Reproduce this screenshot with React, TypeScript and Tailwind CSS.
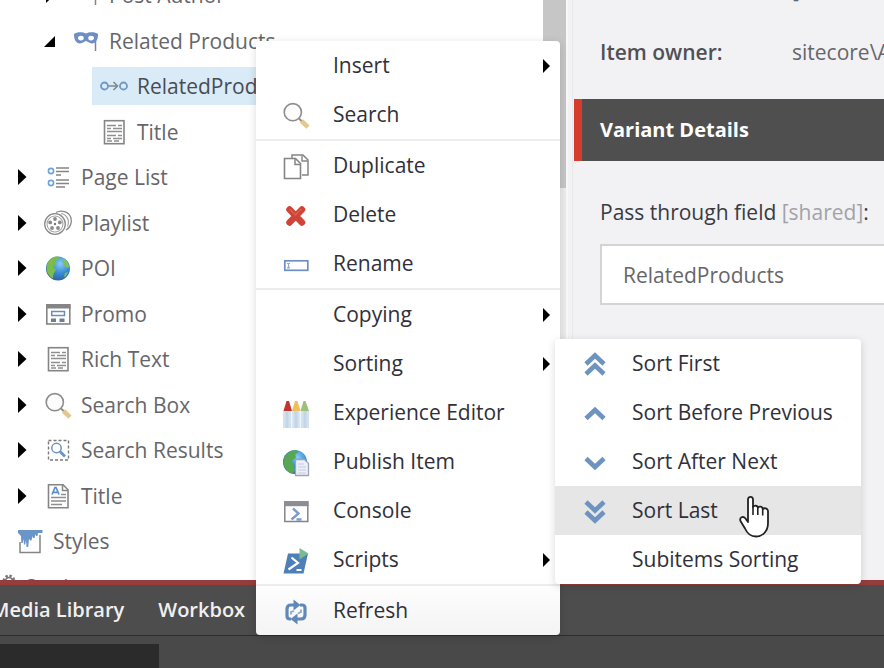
import type { ReactNode } from "react";

const GRAY = "#858585";
const BLUE = "#6a93c6";

function Icon({ children }: { children: ReactNode }) {
  return (
    <svg width="28" height="28" viewBox="0 0 28 28" fill="none" aria-hidden="true" className="shrink-0 overflow-visible">
      {children}
    </svg>
  );
}

const VariantIcon = () => (
  <Icon>
    <path d="M23.5 14v10" stroke={GRAY} strokeWidth="1.5" />
    <path
      fillRule="evenodd"
      fill="#6f8fc4"
      d="M2 7c3-2.500 9-2 12-.5 3-1.500 9-2 12 .5.3 5-2 9.500-6 9.500-3 0-4.500-2.500-6-2.500s-3 2.500-6 2.500C4 16.500 1.700 12 2 7zm4 4c0 1.500 1.200 2.400 3 2.400s2.800-1 2.800-2.400-1.200-2.200-2.800-2.200-3 .7-3 2.200zm10.200 0c0 1.400 1 2.400 2.800 2.400s3-.9 3-2.400-1.400-2.200-3-2.200-2.800.8-2.800 2.200z"
    />
  </Icon>
);

const LinkIcon = () => (
  <Icon>
    <circle cx="4.500" cy="14" r="3.500" stroke="#6f97c4" strokeWidth="1.800" />
    <circle cx="23.500" cy="14" r="3.500" stroke="#6f97c4" strokeWidth="1.800" />
    <path d="M8.500 14h9M13.500 10l4 4-4 4" stroke="#7d8a92" strokeWidth="1.600" />
  </Icon>
);

const DocIcon = () => (
  <Icon>
    <rect x="4.500" y="2.700" width="19.500" height="23" stroke={GRAY} strokeWidth="1.600" />
    <path
      d="M7 7.500h9M18 7.500h4M7 10.500h4M13 10.500h9M7 13.500h15M7 17.500h9M18 17.500h4M7 20.500h4M13 20.500h9M7 23h5M14 23h5"
      stroke="#8f8f8f"
      strokeWidth="1.300"
    />
  </Icon>
);

const ListIcon = () => (
  <Icon>
    <circle cx="7" cy="8" r="2.600" stroke="#6ea3d8" strokeWidth="1.600" />
    <circle cx="7" cy="20" r="2.600" stroke="#6ea3d8" strokeWidth="1.600" />
    <path d="M12 5h13M12 8.500h13M12 12h5M12 17h13M12 20.500h13M12 24h9" stroke={GRAY} strokeWidth="1.500" />
  </Icon>
);

const ReelIcon = () => (
  <Icon>
    <path d="M12 3.500C17 .5 25 2.500 27 9c1.200 5-1 10-5 12" stroke="#8a8a8a" strokeWidth="1.300" />
    <path d="M17 4.500c6 1 9 7 6.500 13" stroke="#a5a5a5" strokeWidth="1.200" />
    <circle cx="11" cy="15" r="10.300" stroke="#8a8a8a" strokeWidth="1.300" fill="#fff" />
    <circle cx="11" cy="15" r="8" stroke="#a5a5a5" strokeWidth="1.100" />
    <circle cx="11" cy="15" r="1.200" fill="#777" />
    <g fill="#8a8a8a">
      <circle cx="11" cy="10" r="1.900" />
      <circle cx="15.800" cy="13.400" r="1.900" />
      <circle cx="14" cy="19" r="1.900" />
      <circle cx="8" cy="19" r="1.900" />
      <circle cx="6.200" cy="13.400" r="1.900" />
    </g>
  </Icon>
);

const GlobeIcon = () => (
  <Icon>
    <defs>
      <radialGradient id="ocean" cx=".6" cy=".3" r=".75">
        <stop offset="0" stopColor="#8acbf4" />
        <stop offset=".5" stopColor="#3a8fd6" />
        <stop offset="1" stopColor="#2a5c9e" />
      </radialGradient>
    </defs>
    <circle cx="14" cy="14.500" r="12" fill="url(#ocean)" />
    <path d="M3.500 9C6 4 10 2.300 14 2.500l1 2.500-4 2 1.500 3-3.500 2.500 3 3.500-2.500 4-.5 4.500C4 22 1 16 3.500 9z" fill="#7cbc4a" />
    <path d="M19 4l4 3 2.500 6-2.500 1-3-3.500-1.500-3zM21 19l3-1-2 4-2 1z" fill="#86c055" />
  </Icon>
);

const PromoIcon = () => (
  <Icon>
    <rect x="2.800" y="5" width="23" height="19" stroke={GRAY} strokeWidth="1.600" />
    <path d="M2 4h24.500v4.500H2z" fill={GRAY} />
    <rect x="7.700" y="11.500" width="12.800" height="4" stroke="#6b8dba" strokeWidth="1.500" />
    <path d="M7 18.500h5V22H7zM15.500 18.500h5V22h-5z" fill="#6d7f96" />
  </Icon>
);

const SearchIcon = () => (
  <Icon>
    <circle cx="10.800" cy="11.200" r="8.600" stroke="#8e8e8e" strokeWidth="1.600" fill="#fcfcfc" />
    <path d="M17 17.500l3 3" stroke="#8e8e8e" strokeWidth="2" />
    <path d="M19.500 20l6.500 6.200" stroke="#e3c990" strokeWidth="4.600" />
  </Icon>
);

const SearchResultsIcon = () => (
  <Icon>
    <rect x="4.500" y="4.500" width="20" height="19.500" stroke="#7a7a7a" strokeWidth="1.400" strokeDasharray="3 2" />
    <circle cx="12.500" cy="12" r="4.700" stroke={BLUE} strokeWidth="1.500" />
    <path d="M16 15.500l5 5" stroke={BLUE} strokeWidth="2.800" />
  </Icon>
);

const TitleIcon = () => (
  <Icon>
    <path d="M4.500 2.800h14.500l5 5v18H4.500z" stroke={GRAY} strokeWidth="1.600" />
    <path d="M18.500 3v5.500H24" stroke={GRAY} strokeWidth="1.500" />
    <path d="M8 12.500l3-7h1l3 7M9 10.300h5" stroke="#5f8fca" strokeWidth="1.700" />
    <path d="M17 12.500h5M7 15.500h15M7 19h15M7 22.500h11" stroke="#8f8f8f" strokeWidth="1.400" />
  </Icon>
);

const PaintIcon = () => (
  <Icon>
    <path d="M4 15v10.500h20V8" stroke={GRAY} strokeWidth="1.500" />
    <path
      d="M2 3h24.500v3h-4.500l-.5 3h-1.500l-.5-2-1 4h-1.500l-.5-2-1 4.500h-1.200L13 12l-.8 8h-1.700L10 13l-.8 4.500H8L7.500 12l-.8 4H5.300L5 9 2 6z"
      fill="#6a95c8"
    />
  </Icon>
);

const GearIcon = () => (
  <Icon>
    <circle cx="21" cy="8" r="5" stroke="#777" strokeWidth="3" strokeDasharray="2.200 1.700" />
    <circle cx="21" cy="8" r="3.500" stroke="#777" strokeWidth="1.500" />
  </Icon>
);

const CopyIcon = () => (
  <Icon>
    <path d="M10 6V3h11l5 5v15h-6" stroke={GRAY} strokeWidth="1.500" />
    <path d="M20 3.500V9h5.500" stroke={GRAY} strokeWidth="1.400" />
    <path d="M2.500 6.500h11l5 5v15h-16z" fill="#fff" stroke={GRAY} strokeWidth="1.600" />
    <path d="M13 7v5.500h5.500" stroke={GRAY} strokeWidth="1.500" />
  </Icon>
);

const DeleteIcon = () => (
  <Icon>
    <path
      d="M7.500 8.500l12.500 13M20 8.500L7.500 21.500"
      stroke="#cf4436"
      strokeWidth="6.500"
      strokeLinecap="round"
    />
    <path d="M7.500 8l6 6 6-6" stroke="#dc6255" strokeWidth="1.200" />
  </Icon>
);

const RenameIcon = () => (
  <Icon>
    <rect x="2.800" y="10.800" width="23" height="9.500" stroke="#6d8fc4" strokeWidth="1.700" />
    <path d="M5 13.500h3M5 17.800h3M6.500 13.500v4.500" stroke="#8fa9cc" strokeWidth="1.200" />
  </Icon>
);

const CrayonIcon = () => (
  <Icon>
    <path d="M1 12h26v17H1z" fill="#d3e2ef" />
    <path d="M5 12v17M14 12v17M23 12v17" stroke="#c3d5e6" strokeWidth="3" />
    <path d="M9.700 12v17M18.300 12v17" stroke="#f2f7fb" strokeWidth="1.200" />
    <path d="M1.500 12L4.500 2h2.500l3 10z" fill="#c1352f" />
    <path d="M10 12l3-10h2.500l3 10z" fill="#ecc15c" />
    <path d="M18.500 12l3-10h2L27 12z" fill="#9dc07c" />
  </Icon>
);

const PublishIcon = () => (
  <Icon>
    <circle cx="13" cy="14" r="12" fill="url(#ocean)" />
    <path d="M2 11C4 4.500 9 1.800 14 2.200l3 1.300-4 3 1 3-4 3 1 4.500 2 5-2 3.500C5 25 0 18 2 11z" fill="#57a850" />
    <path d="M13.500 11.500h9l4 4V27.500h-13z" fill="#edf0f8" stroke="#9ba3bd" strokeWidth="1.300" />
    <path d="M16 16h6M16 19h8M16 22h8M16 25h8" stroke="#c5cce0" strokeWidth="1" />
  </Icon>
);

const ConsoleIcon = () => (
  <Icon>
    <rect x="2.800" y="5" width="23" height="19.500" stroke={GRAY} strokeWidth="1.500" fill="#fff" />
    <path d="M2 4.200h24.500v5H2z" fill="#8a8d94" />
    <path d="M11 11.500l5.500 5-7 6M14.500 22.500h5" stroke="#7e9bd0" strokeWidth="2.400" />
  </Icon>
);

const ScriptsIcon = () => (
  <Icon>
    <path d="M6 7.500h20L21.500 27.500H1.500z" fill="#4d80b8" />
    <path d="M9.500 11.500l6.500 5.500-9.500 6.500M14.500 24h5" stroke="#fff" strokeWidth="2.200" />
    <path d="M17.500 2l9 5.500-9 6z" fill="#7dba93" />
  </Icon>
);

const RefreshIcon = () => (
  <Icon>
    <g stroke="#6088b8" strokeWidth="3.200" strokeLinejoin="round">
      <path d="M9 22H8c-2.500 0-3-1.500-3-3v-7c0-2.500 1.500-4 4-4h5" />
      <path d="M18 8h2c2.500 0 3 1.500 3 3v7c0 2.500-1.500 4-4 4h-5" />
    </g>
    <path d="M11.500 2.500l7 5.500-7 5.500zM15.500 16.500l-7 5.500 7 5.500z" fill="#6088b8" />
    <path d="M9 17.500v-2.500l3-1M19 12.500v2.500l-3 1.500" stroke="#8aa9cf" strokeWidth="1.800" />
  </Icon>
);

const Chevrons = ({ d }: { d: string }) => (
  <Icon>
    <path d={d} stroke="#6d94c0" strokeWidth="4.600" />
  </Icon>
);

type TreeItem = { label: string; indent: string; icon: ReactNode; state?: "open" | "closed"; selected?: boolean };

const tree: TreeItem[] = [
  { label: "Post Author", indent: "pl-11", icon: <VariantIcon />, state: "closed" },
  { label: "Related Products", indent: "pl-11", icon: <VariantIcon />, state: "open" },
  { label: "RelatedProducts", indent: "pl-[72px]", icon: <LinkIcon />, selected: true },
  { label: "Title", indent: "pl-[72px]", icon: <DocIcon /> },
  { label: "Page List", indent: "pl-4", icon: <ListIcon />, state: "closed" },
  { label: "Playlist", indent: "pl-4", icon: <ReelIcon />, state: "closed" },
  { label: "POI", indent: "pl-4", icon: <GlobeIcon />, state: "closed" },
  { label: "Promo", indent: "pl-4", icon: <PromoIcon />, state: "closed" },
  { label: "Rich Text", indent: "pl-4", icon: <DocIcon />, state: "closed" },
  { label: "Search Box", indent: "pl-4", icon: <SearchIcon />, state: "closed" },
  { label: "Search Results", indent: "pl-4", icon: <SearchResultsIcon />, state: "closed" },
  { label: "Title", indent: "pl-4", icon: <TitleIcon />, state: "closed" },
  { label: "Styles", indent: "-ml-3", icon: <PaintIcon /> },
  { label: "Settings", indent: "-ml-10", icon: <GearIcon /> },
];

function TreeRow({ item }: { item: TreeItem }) {
  return (
    <li className={`flex shrink-0 items-center odd:h-[46px] even:h-[45px] ${item.indent}`}>
      <span className="flex w-7 shrink-0 items-center">
        {item.state && (
          <button type="button" aria-label={`${item.state === "open" ? "Collapse" : "Expand"} ${item.label}`}>
            <svg width="12" height="18" viewBox="0 0 12 18" aria-hidden="true">
              {item.state === "open" ? <path d="M11 4v11H0z" /> : <path d="M2 1l8.500 8L2 17z" />}
            </svg>
          </button>
        )}
      </span>
      <a
        href="#"
        className={`-ml-2 flex h-[38px] items-center gap-[9px] pl-2 whitespace-nowrap ${item.selected ? "grow bg-[#d9ebf6] text-[#474c55]" : ""}`}
      >
        {item.icon}
        {item.label}
      </a>
    </li>
  );
}

type MenuEntry = { label: string; icon?: ReactNode; sub?: boolean; hover?: boolean };

function MenuItem({ item }: { item: MenuEntry }) {
  return (
    <button
      type="button"
      role="menuitem"
      className={`flex h-[49px] w-full items-center gap-[23px] pr-[9px] pl-[26px] text-left whitespace-nowrap ${item.hover ? "bg-[#e6e6e6]" : ""}`}
    >
      <span className="w-7 shrink-0">{item.icon}</span>
      <span className="grow pb-0.5">{item.label}</span>
      {item.sub && (
        <svg width="9" height="14" viewBox="0 0 9 14" aria-hidden="true">
          <path d="M1 0l7 7-7 7z" fill="#000" />
        </svg>
      )}
    </button>
  );
}

const groups: MenuEntry[][] = [
  [{ label: "Insert", sub: true }, { label: "Search", icon: <SearchIcon /> }],
  [
    { label: "Duplicate", icon: <CopyIcon /> },
    { label: "Delete", icon: <DeleteIcon /> },
    { label: "Rename", icon: <RenameIcon /> },
  ],
  [
    { label: "Copying", sub: true },
    { label: "Sorting", sub: true },
    { label: "Experience Editor", icon: <CrayonIcon /> },
    { label: "Publish Item", icon: <PublishIcon /> },
    { label: "Console", icon: <ConsoleIcon /> },
    { label: "Scripts", icon: <ScriptsIcon />, sub: true },
  ],
  [{ label: "Refresh", icon: <RefreshIcon /> }],
];

const sorting: MenuEntry[] = [
  { label: "Sort First", icon: <Chevrons d="M5 14l9-8.500 9 8.500M5 24l9-8.500 9 8.500" /> },
  { label: "Sort Before Previous", icon: <Chevrons d="M5 19.500l9-8.500 9 8.500" /> },
  { label: "Sort After Next", icon: <Chevrons d="M5 10.500l9 8.500 9-8.500" /> },
  { label: "Sort Last", icon: <Chevrons d="M5 5l9 8.500 9-8.500M5 15l9 8.500 9-8.500" />, hover: true },
  { label: "Subitems Sorting" },
];

export default function App() {
  return (
    <div className="relative flex h-screen flex-col overflow-hidden bg-white font-['Open_Sans',sans-serif] text-[21px] leading-7 text-[#66666a]">
      <main className="flex min-h-0 grow">
        <nav aria-label="Content tree" className="w-[543px] shrink-0 overflow-hidden">
          <ul className="-mt-7 flex flex-col">
            {tree.map((item, i) => (
              <TreeRow key={i} item={item} />
            ))}
          </ul>
        </nav>
        <div className="w-[23px] shrink-0 bg-[#ececec]">
          <div className="h-[188px] bg-[#c6c6c6]" />
        </div>
        <section className="min-w-0 grow border-l-2 border-[#f8f8f8] bg-[#f2f2f4]">
          <div className="ml-1 h-full border-l border-[#e8e8ea] pl-px">
            <dl className="-mt-6 pl-[26px] whitespace-nowrap">
              <div className="flex h-[50px]">
                <dt className="w-48 shrink-0 font-semibold text-[#505056]">Created from:</dt>
                <dd>[unknown]</dd>
              </div>
              <div className="flex h-[73px] pt-3">
                <dt className="w-48 shrink-0 font-semibold text-[#505056]">Item owner:</dt>
                <dd>sitecore\Admin</dd>
              </div>
            </dl>
            <h2 className="flex h-[62px] items-center border-l-8 border-[#d63c2c] bg-[#4f4f4f] pl-[18px] text-[20px] font-bold text-white">
              Variant Details
            </h2>
            <div className="pt-[37px] pl-[26px]">
              <label htmlFor="pass" className="block whitespace-nowrap text-[#3a3a42]">
                Pass through field <span className="text-[#a3a3a6]">[shared]</span>:
              </label>
              <input
                id="pass"
                defaultValue="RelatedProducts"
                className="mt-[18px] block h-[61px] w-full border-2 border-r-0 border-[#d4d4d4] bg-white px-[21px] outline-none"
              />
            </div>
          </div>
        </section>
      </main>

      <footer className="shrink-0">
        <nav
          aria-label="Applications"
          className="flex h-[55px] items-center gap-[34px] border-t-[5px] border-[#963c3c] bg-[#4d4d4e] text-[20px] font-semibold whitespace-nowrap text-[#f0f0f0]"
        >
          <a href="#" className="-ml-[9px]">Media Library</a>
          <a href="#">Workbox</a>
        </nav>
        <div className="h-[33px] border-t border-[#2d2d2d] bg-[#494949] pt-2">
          <div className="h-6 w-[159px] bg-[#2b2b2b]" />
        </div>
      </footer>

      <div
        role="menu"
        aria-label="Item actions"
        className="absolute top-[41px] left-[256px] w-[304px] divide-y-2 divide-[#ececec] rounded bg-linear-to-b from-white from-90% to-[#f4f4f4] text-[#30303a] shadow-[0_2px_8px_rgba(0,0,0,0.15)]"
      >
        {groups.map((group, i) => (
          <div key={i} role="group">
            {group.map((item) => (
              <MenuItem key={item.label} item={item} />
            ))}
          </div>
        ))}
      </div>

      <div
        role="menu"
        aria-label="Sorting"
        className="absolute top-[339px] left-[555px] w-[306px] rounded bg-white text-[#30303a] shadow-[0_2px_8px_rgba(0,0,0,0.15)]"
      >
        {sorting.map((item) => (
          <MenuItem key={item.label} item={item} />
        ))}
      </div>

      <svg width="34" height="44" viewBox="0 0 34 44" aria-hidden="true" className="absolute top-[495px] left-[738px]">
        <path
          d="M10 4.500c0-3.500 5-3.500 5 0V12c1.500-2 4.500-1.500 4.800.5 1.700-1.700 4.700-1 4.900 1.500 1.800-1.500 5-.7 5.300 2V28c0 8-5 13.500-12 13.500-5.500 0-9-3.500-11-8L2.500 26c-1.300-3.500 2.500-5.500 5-2.500L10 27z"
          fill="#fff"
          stroke="#222"
          strokeWidth="1.800"
          strokeLinejoin="round"
        />
        <path d="M15 11v9M19.800 12.500v7.500M24.700 14v6.500" stroke="#222" strokeWidth="1.600" />
      </svg>
    </div>
  );
}
